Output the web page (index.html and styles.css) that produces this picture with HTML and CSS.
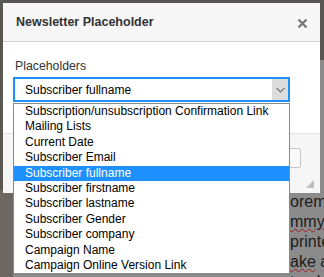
FILE: index.html
```html
<!DOCTYPE html>
<html>
<head>
<meta charset="utf-8">
<link rel="stylesheet" href="styles.css">
</head>
<body>
<div class="strip"></div>
<div class="editor">
  <div class="line">orem Ipsum is simply</div>
  <div class="line"><span class="spell">mmy</span> text of the</div>
  <div class="line">printer took a galley</div>
  <div class="line"><span class="spell">ake</span> a type specimen</div>
  <div class="line">t only five centuries</div>
</div>

<div class="dialog">
  <div class="dlg-head">
    <span class="title">Newsletter Placeholder</span>
    <svg class="close" width="11" height="11" viewBox="0 0 11 11"><path d="M1.5 1.5 L9.5 9.5 M9.5 1.5 L1.5 9.5" stroke="#777" stroke-width="2.3" fill="none"/></svg>
  </div>
  <div class="dlg-body">
    <div class="label">Placeholders</div>
    <div class="select">
      <span class="sel-text">Subscriber fullname</span>
      <span class="arrow"><svg width="9" height="6" viewBox="0 0 9 6"><path d="M0.5 1 L4.5 5 L8.5 1" stroke="#777" stroke-width="1.2" fill="none"/></svg></span>
    </div>
  </div>
  <div class="dlg-foot">
    <div class="btn"></div>
    <svg class="grip" width="8" height="8" viewBox="0 0 8 8"><polygon points="8,0 8,8 0,8" fill="#bdbdbd"/></svg>
  </div>
</div>

<ul class="dropdown">
  <li>Subscription/unsubscription Confirmation Link</li>
  <li>Mailing Lists</li>
  <li>Current Date</li>
  <li>Subscriber Email</li>
  <li class="sel">Subscriber fullname</li>
  <li>Subscriber firstname</li>
  <li>Subscriber lastname</li>
  <li>Subscriber Gender</li>
  <li>Subscriber company</li>
  <li>Campaign Name</li>
  <li>Campaign Online Version Link</li>
</ul>
</body>
</html>
```

FILE: styles.css
```css
html, body {
  margin: 0;
  padding: 0;
}
body {
  width: 324px;
  height: 277px;
  overflow: hidden;
  position: relative;
  display: flex;
  background: #5a5652;
  font-family: "Liberation Sans", Arial, sans-serif;
}
.strip {
  width: 13px;
  flex: none;
  margin-top: 190px;
  background: #6c6763;
}
.editor {
  flex: 1;
  margin-top: 60px;
  background: #8b8b8b;
  padding: 132px 0 0 277px;
  font-size: 16px;
  line-height: 20px;
  color: #1c1c1c;
  white-space: nowrap;
  overflow: hidden;
}
.spell {
  text-decoration: underline wavy #a02020;
  text-decoration-thickness: 1px;
}
.dialog {
  position: absolute;
  left: 3px;
  top: 3px;
  width: 317px;
  height: 190px;
  background: #fff;
  display: flex;
  flex-direction: column;
}
.dlg-head {
  height: 38px;
  flex: none;
  background: #f7f7f7;
  border-bottom: 1px solid #d2d2d2;
  display: flex;
  align-items: center;
  justify-content: space-between;
  padding: 0 12px 0 13px;
}
.title {
  font-weight: bold;
  font-size: 12.5px;
  color: #333;
}
.close {
  display: block;
  margin-top: 2px;
}
.dlg-body {
  flex: 1;
  padding: 17px 0 0 10px;
}
.label {
  font-size: 12.3px;
  line-height: 14px;
  color: #333;
  margin-left: 2px;
}
.select {
  margin-top: 4px;
  width: 277px;
  height: 25px;
  box-sizing: border-box;
  border: 2px solid #1e90ff;
  display: flex;
  align-items: center;
  padding-left: 10px;
  font-size: 12px;
  color: #000;
}
.arrow {
  margin-left: auto;
  align-self: stretch;
  width: 16px;
  background: #dddddd;
  display: flex;
  align-items: center;
  justify-content: center;
}
.arrow svg {
  display: block;
}
.dlg-foot {
  height: 45px;
  flex: none;
  border-top: 1px solid #e3e3e3;
  background: #f6f6f6;
  display: flex;
  justify-content: flex-end;
  align-items: flex-start;
  padding: 14px 19px 0 0;
  position: relative;
}
.btn {
  width: 60px;
  height: 20px;
  box-sizing: border-box;
  border: 1px solid #c8c8c8;
  background: #fafafa;
  border-radius: 2px;
}
.grip {
  position: absolute;
  right: 6px;
  bottom: 5px;
}
.dropdown {
  position: absolute;
  left: 13px;
  top: 103px;
  width: 277px;
  box-sizing: border-box;
  margin: 0;
  padding: 0;
  list-style: none;
  background: #fff;
  border: 1px solid #8a8a8a;
  font-size: 12px;
  color: #000;
}
.dropdown li {
  height: 15.4px;
  line-height: 15.4px;
  padding-left: 11px;
  white-space: nowrap;
}
.dropdown li.sel {
  background: #1e90ff;
  color: #fff;
}
```
